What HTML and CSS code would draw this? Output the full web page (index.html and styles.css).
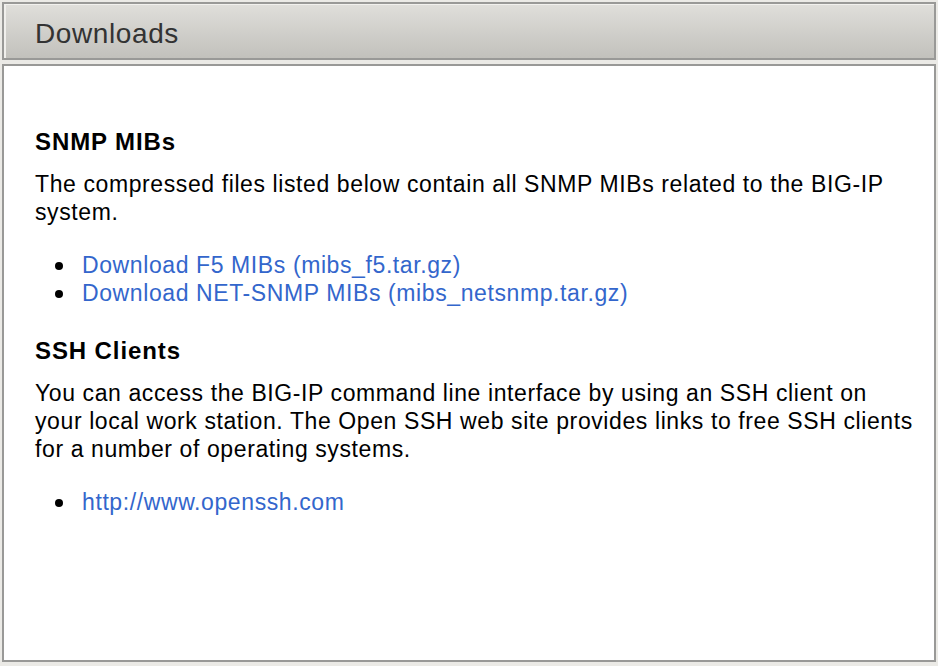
FILE: index.html
```html
<!DOCTYPE html>
<html>
<head>
<meta charset="utf-8">
<link rel="stylesheet" href="styles.css">
</head>
<body>
<div class="header"><div class="header-inner"><h1 class="title">Downloads</h1></div></div>
<div class="content">
  <h2 class="section-title">SNMP MIBs</h2>
  <p class="text">The compressed files listed below contain all SNMP MIBs related to the BIG-IP system.</p>
  <ul class="links">
    <li><a href="#">Download F5 MIBs (mibs_f5.tar.gz)</a></li>
    <li><a href="#">Download NET-SNMP MIBs (mibs_netsnmp.tar.gz)</a></li>
  </ul>
  <h2 class="section-title">SSH Clients</h2>
  <p class="text">You can access the BIG-IP command line interface by using an SSH client on your local work station. The Open SSH web site provides links to free SSH clients for a number of operating systems.</p>
  <ul class="links">
    <li><a href="#">http://www.openssh.com</a></li>
  </ul>
</div>
</body>
</html>
```
FILE: styles.css
```css
html, body {
  margin: 0;
  padding: 0;
}
body {
  background: #ebeae6;
  font-family: "Liberation Sans", Arial, sans-serif;
  padding: 2px;
  width: 934px;
}
.header {
  border: 2px solid #999997;
  height: 54px;
}
.header-inner {
  height: 53px;
  border-top: 1px solid #f2f1ee;
  border-left: 2px solid #f0efec;
  background: linear-gradient(to bottom, #dfdeda, #c2c1bc);
  display: flex;
  align-items: center;
  padding-left: 29px;
}
.title {
  margin: 0;
  font-size: 28px;
  letter-spacing: 0.6px;
  font-weight: normal;
  color: #333333;
  line-height: 32px;
  padding-top: 5px;
}
.content {
  margin-top: 4px;
  border: 2px solid #999997;
  background: #ffffff;
  padding: 62px 17px 0 31px;
  box-sizing: border-box;
  height: 598px;
  color: #000;
}
.section-title {
  margin: 0 0 14px 0;
  font-size: 24px;
  letter-spacing: 0.9px;
  line-height: 28px;
  font-weight: bold;
}
.text {
  margin: 0;
  font-size: 23px;
  letter-spacing: 0.6px;
  line-height: 28px;
}
.links {
  margin: 25px 0 30px 0;
  padding-left: 20px;
  list-style: none;
  font-size: 23px;
  letter-spacing: 0.6px;
  line-height: 28px;
}
.links li {
  display: flex;
  align-items: flex-start;
}
.links li::before {
  content: "";
  flex: none;
  width: 8px;
  height: 8px;
  border-radius: 50%;
  background: #000;
  margin-top: 11px;
  margin-right: 19px;
}
.links a {
  color: #3366cc;
  text-decoration: none;
}
```
